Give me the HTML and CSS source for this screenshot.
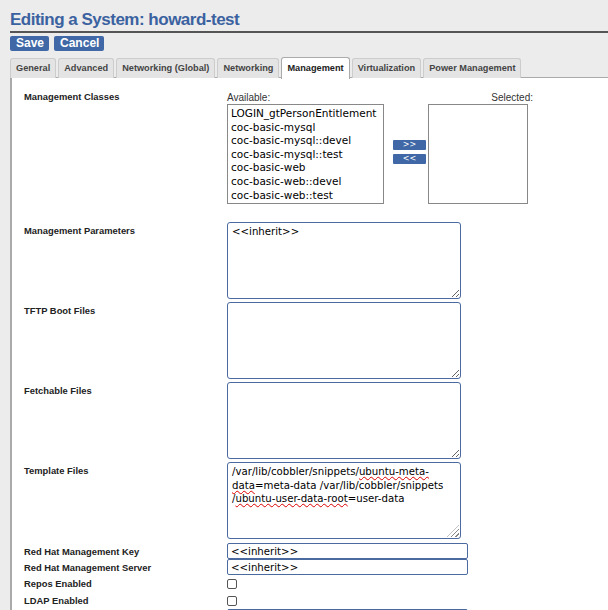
FILE: index.html
```html
<!DOCTYPE html>
<html>
<head>
<meta charset="utf-8">
<link rel="stylesheet" href="styles.css">
</head>
<body>
<div class="page">
  <h1 class="title">Editing a System: howard-test</h1>
  <div class="actions">
    <button class="btn">Save</button>
    <button class="btn">Cancel</button>
  </div>
  <ul class="tabs">
    <li class="tab">General</li>
    <li class="tab">Advanced</li>
    <li class="tab">Networking (Global)</li>
    <li class="tab">Networking</li>
    <li class="tab active">Management</li>
    <li class="tab">Virtualization</li>
    <li class="tab">Power Management</li>
  </ul>
  <div class="panel">
    <div class="row row-classes">
      <div class="label">Management Classes</div>
      <div class="field classes">
        <div class="col-avail">
          <div class="cap">Available:</div>
          <div class="listbox">
            <div>LOGIN_gtPersonEntitlement</div>
            <div>coc-basic-mysql</div>
            <div>coc-basic-mysql::devel</div>
            <div>coc-basic-mysql::test</div>
            <div>coc-basic-web</div>
            <div>coc-basic-web::devel</div>
            <div>coc-basic-web::test</div>
          </div>
        </div>
        <div class="col-btns">
          <button class="mini">&gt;&gt;</button>
          <button class="mini">&lt;&lt;</button>
        </div>
        <div class="col-sel">
          <div class="cap cap-right">Selected:</div>
          <div class="listbox listbox-sel"></div>
        </div>
      </div>
    </div>
    <div class="row row-area">
      <div class="label">Management Parameters</div>
      <div class="field"><textarea class="area">&lt;&lt;inherit&gt;&gt;</textarea></div>
    </div>
    <div class="row row-area">
      <div class="label">TFTP Boot Files</div>
      <div class="field"><textarea class="area"></textarea></div>
    </div>
    <div class="row row-area">
      <div class="label">Fetchable Files</div>
      <div class="field"><textarea class="area"></textarea></div>
    </div>
    <div class="row row-area">
      <div class="label">Template Files</div>
      <div class="field"><div class="area area-div">/var/lib/cobbler/snippets/<span class="sp">ubuntu-meta-data</span>=meta-data /var/lib/cobbler/snippets /<span class="sp">ubuntu-user-data-root</span>=user-data<span class="grip"></span></div></div>
    </div>
    <div class="row row-input">
      <div class="label">Red Hat Management Key</div>
      <div class="field"><input class="text" type="text" value="&lt;&lt;inherit&gt;&gt;"></div>
    </div>
    <div class="row row-input">
      <div class="label">Red Hat Management Server</div>
      <div class="field"><input class="text" type="text" value="&lt;&lt;inherit&gt;&gt;"></div>
    </div>
    <div class="row row-check">
      <div class="label">Repos Enabled</div>
      <div class="field"><input class="check" type="checkbox"></div>
    </div>
    <div class="row row-check">
      <div class="label">LDAP Enabled</div>
      <div class="field"><input class="check" type="checkbox"></div>
    </div>
    <div class="row row-input">
      <div class="label">LDAP Type</div>
      <div class="field"><input class="text" type="text" value=""></div>
    </div>
  </div>
</div>
</body>
</html>
```
FILE: styles.css
```css
html, body {
  margin: 0;
  padding: 0;
  background: #ececec;
  overflow: hidden;
}
.page {
  padding: 10px 0 0 10px;
  font-family: "Liberation Sans", Arial, sans-serif;
  color: #222;
}
.title {
  margin: 0;
  font-size: 17px;
  letter-spacing: -0.5px;
  font-weight: bold;
  color: #3b62a0;
  line-height: 20px;
  padding-bottom: 1px;
  border-bottom: 2px solid #555;
}
.actions {
  display: flex;
  gap: 5px;
  margin-top: 3px;
}
.btn {
  font-family: "Liberation Sans", Arial, sans-serif;
  font-size: 12px;
  font-weight: bold;
  color: #fff;
  background: #4068a6;
  border: none;
  border-radius: 2px;
  padding: 1px 5px 1px 6px;
  height: 15px;
  line-height: 13px;
}
.tabs {
  list-style: none;
  margin: 6px 0 0 0;
  padding: 0;
  display: flex;
  gap: 2px;
  border-bottom: 1px solid #aaa;
  height: 20px;
}
.tab {
  font-size: 9.2px;
  font-weight: bold;
  color: #444;
  background: #e4e4e4;
  border: 1px solid #ccc;
  border-bottom: none;
  border-radius: 3px 3px 0 0;
  padding: 0 5px;
  line-height: 19px;
  height: 19px;
  margin-top: 1px;
}
.tab.active {
  background: #fff;
  color: #222;
  height: 21px;
  margin-top: 0;
  line-height: 21px;
  border-color: #aaa;
}
.panel {
  background: #fff;
  border-left: 2px solid #aaa;
  padding: 9px 0 0 12px;
  height: 600px;
}
.row {
  display: flex;
}
.label {
  width: 203px;
  flex: none;
  font-size: 9.4px;
  font-weight: bold;
  color: #222;
}
.field {
  flex: none;
}
.row-classes .label {
  padding-top: 4px;
}
.classes {
  display: flex;
  font-family: "DejaVu Sans", Verdana, sans-serif;
}
.cap {
  font-family: "Liberation Sans", Arial, sans-serif;
  font-size: 10px;
  color: #333;
  height: 13px;
  line-height: 13px;
  padding-top: 4px;
}
.cap-right {
  text-align: right;
}
.listbox {
  width: 157px;
  height: 100px;
  border: 1px solid #888;
  font-size: 10.5px;
  line-height: 13.6px;
  padding: 2px 0 0 3px;
  box-sizing: border-box;
  color: #000;
  overflow: hidden;
}
.listbox-sel {
  width: 100px;
  padding: 0;
}
.col-sel {
  width: 105px;
}
.col-btns {
  display: flex;
  flex-direction: column;
  gap: 4px;
  padding: 53px 2px 0 9px;
}
.mini {
  width: 33px;
  height: 10px;
  border: none;
  border-radius: 1px;
  background: #4068a6;
  color: #fff;
  font-size: 8px;
  line-height: 10px;
  padding: 0;
  font-family: "DejaVu Sans", sans-serif;
}
.row-area {
  margin-top: 3px;
}
.row-classes + .row-area {
  margin-top: 18px;
}
.row-area .label {
  padding-top: 3px;
}
.area {
  display: block;
  width: 234px;
  height: 77px;
  box-sizing: border-box;
  border: 1px solid #4a6aa0;
  border-radius: 3px;
  font-family: "DejaVu Sans", Verdana, sans-serif;
  font-size: 10.2px;
  line-height: 13.5px;
  padding: 2px 4px;
  margin: 0;
  resize: both;
  color: #000;
  outline: none;
}
.area-div {
  position: relative;
  white-space: normal;
  word-wrap: break-word;
}
.sp {
  text-decoration: underline wavy #d00;
  text-decoration-thickness: 1px;
  text-underline-offset: 1px;
}
.grip {
  position: absolute;
  right: 1px;
  bottom: 1px;
  width: 12px;
  height: 12px;
  background: repeating-linear-gradient(135deg, transparent 0 2px, #888 2px 3px);
  clip-path: polygon(100% 0, 100% 100%, 0 100%);
}
.row-area + .row-input {
  margin-top: 4px;
}
.row-input .label {
  padding-top: 3px;
}
.text {
  display: block;
  width: 241px;
  height: 16px;
  box-sizing: border-box;
  border: 1px solid #4a6aa0;
  border-radius: 2px;
  font-family: "DejaVu Sans", Verdana, sans-serif;
  font-size: 10.2px;
  padding: 0 3px;
  margin: 0;
  color: #000;
  outline: none;
}
.row-check {
  height: 17px;
  align-items: center;
}
.check {
  appearance: none;
  -webkit-appearance: none;
  width: 10px;
  height: 10px;
  border: 1px solid #555;
  border-radius: 2px;
  margin: 0;
  background: #fff;
  box-sizing: border-box;
}
```
